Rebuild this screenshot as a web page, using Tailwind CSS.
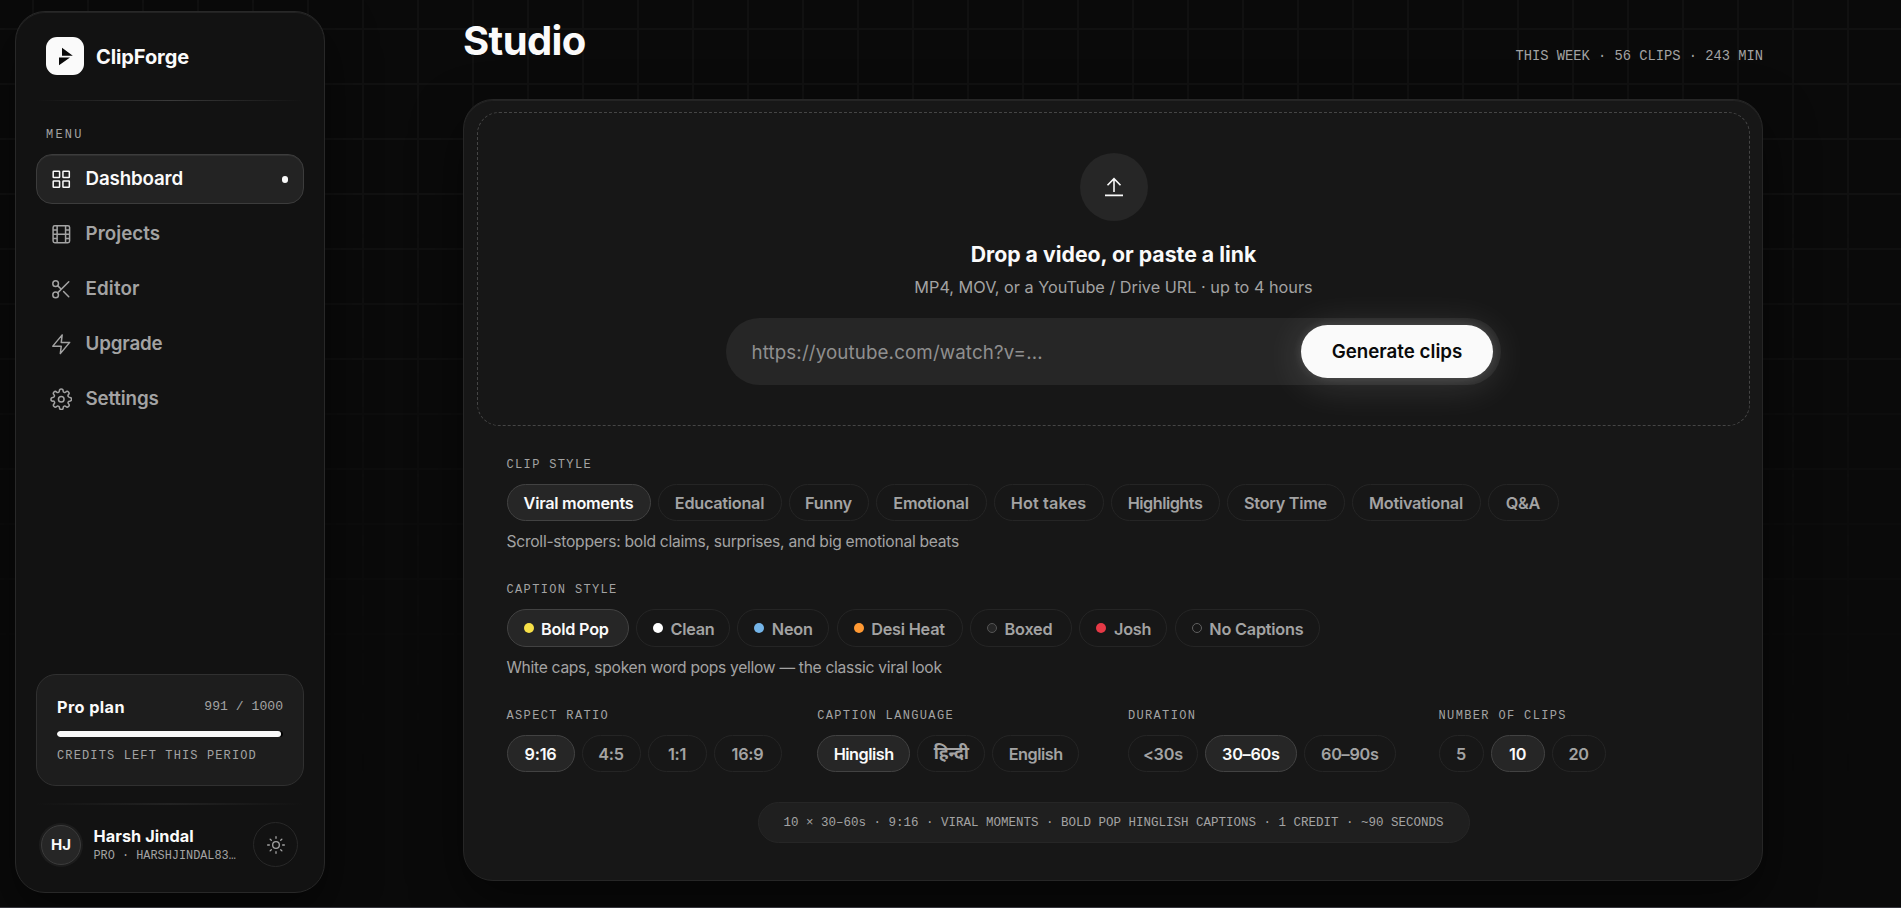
<!DOCTYPE html>
<html lang="en">
<head>
    <meta charset="UTF-8">
    <meta name="viewport" content="width=device-width, initial-scale=1.0">
    <title>ClipForge - Studio</title>
    <script src="https://cdn.jsdelivr.net/npm/@tailwindcss/browser@4"></script>
</head>
<body class="relative flex h-screen overflow-hidden bg-[#0a0a0a] font-['Inter','Noto_Sans',sans-serif] text-[#a3a3a3]">

    <!-- Background grid -->
    <div class="absolute inset-0 bg-[linear-gradient(to_right,#111111_2px,transparent_2px),linear-gradient(to_bottom,#111111_2px,transparent_2px)] bg-[size:55px_55px] bg-[position:32px_28px] mask-[linear-gradient(to_bottom,black_20%,transparent_85%)]"></div>

    <!-- Sidebar -->
    <aside class="relative mt-[11px] ml-[15px] flex h-[882px] w-[310px] shrink-0 flex-col rounded-[30px] border border-[#282828] bg-[#121212] px-5 shadow-[inset_0_1px_0_#222222,0_20px_50px_rgba(0,0,0,0.5)]">
        <div class="mt-[25px] ml-[10px] flex items-center gap-[12px]">
            <div class="size-[38px] rounded-[11px] bg-[#fafafa]">
                <svg viewBox="0 0 38 38" class="size-full fill-[#0a0a0a]"><path d="M16 10.7 26.8 18.7H16zM13 20.4H24L13 28.2z"/></svg>
            </div>
            <span class="pt-[2px] text-[20px] font-bold tracking-[-0.1px] text-[#fafafa]">ClipForge</span>
        </div>
        <div class="mt-[25px] h-px bg-linear-to-r from-transparent via-[#3a3a3a] to-transparent"></div>
        <div class="mt-[25px] ml-[10px] font-['Liberation_Mono',monospace] text-[12px] leading-[18px] tracking-[2.2px]">MENU</div>

        <nav class="mt-[10px] flex flex-col gap-[5px] text-[18.75px] font-semibold tracking-[-0.15px]">
            <a class="flex h-[50px] items-center gap-[13.5px] rounded-2xl border border-[#3c3c3c] bg-[#232323] pr-[15px] pl-[12.5px] text-[#fafafa] shadow-[inset_0_1px_0_#303030]">
                <svg viewBox="0 0 24 24" class="size-[22.5px] fill-none stroke-current stroke-[1.6]"><rect x="3.4" y="3.4" width="6.8" height="6.8" rx=".6"/><rect x="13.8" y="3.4" width="6.8" height="6.8" rx=".6"/><rect x="3.4" y="13.8" width="6.8" height="6.8" rx=".6"/><rect x="13.8" y="13.8" width="6.8" height="6.8" rx=".6"/></svg>
                <span class="flex-1">Dashboard</span>
                <span class="h-[7px] w-[6px] rounded-full bg-[#fafafa]"></span>
            </a>
            <a class="flex h-[50px] items-center gap-[13.5px] border border-transparent px-[12.5px]">
                <svg viewBox="0 0 24 24" class="size-[22.5px] fill-none stroke-current stroke-[1.6]"><rect x="3.3" y="3" width="17.6" height="18" rx="1.8"/><path d="M7.6 3v18M16.6 3v18M3.3 12h17.6M3.3 7.5h4.3M3.3 16.5h4.3M16.6 7.5h4.3M16.6 16.5h4.3"/></svg>
                <span class="tracking-[0.05px]">Projects</span>
            </a>
            <a class="flex h-[50px] items-center gap-[13.5px] border border-transparent px-[12.5px]">
                <svg viewBox="0 0 24 24" class="size-[22.5px] fill-none stroke-current stroke-[1.6] [stroke-linecap:round]"><circle cx="6" cy="6" r="3"/><circle cx="6" cy="18" r="3"/><path d="M20 4 8.12 15.88M14.47 14.48 20 20M8.12 8.12 12 12"/></svg>
                <span class="tracking-[0.15px]">Editor</span>
            </a>
            <a class="flex h-[50px] items-center gap-[13.5px] border border-transparent px-[12.5px]">
                <svg viewBox="0 0 24 24" class="size-[22.5px] fill-none stroke-current stroke-[1.6] [stroke-linejoin:round]"><path d="M13 2 3 14h9l-1 8 10-12h-9z"/></svg>
                <span>Upgrade</span>
            </a>
            <a class="flex h-[50px] items-center gap-[13.5px] border border-transparent px-[12.5px]">
                <svg viewBox="0 0 24 24" class="size-[22.5px] fill-none stroke-current stroke-[1.6] [stroke-linejoin:round]"><circle cx="12" cy="12" r="3"/><path d="M19.4 15a1.65 1.65 0 0 0 .33 1.82l.06.06a2 2 0 0 1-2.83 2.83l-.06-.06a1.65 1.65 0 0 0-2.8 1.18V21a2 2 0 0 1-4 0v-.09A1.65 1.65 0 0 0 9 19.4a1.65 1.65 0 0 0-1.82.33l-.06.06a2 2 0 0 1-2.83-2.83l.06-.06A1.65 1.65 0 0 0 3.17 14H3a2 2 0 0 1 0-4h.09A1.65 1.65 0 0 0 4.6 9a1.65 1.65 0 0 0-.33-1.82l-.06-.06a2 2 0 0 1 2.83-2.83l.06.06A1.65 1.65 0 0 0 9 4.6a1.65 1.65 0 0 0 1-1.51V3a2 2 0 0 1 4 0v.09a1.65 1.65 0 0 0 2.82 1.17l.06-.06a2 2 0 0 1 2.83 2.83l-.06.06a1.65 1.65 0 0 0-.33 1.82 1.65 1.65 0 0 0 1.51 1.09H21a2 2 0 0 1 0 4h-.09a1.65 1.65 0 0 0-1.51 1z"/></svg>
                <span>Settings</span>
            </a>
        </nav>

        <!-- Plan -->
        <div class="mt-auto h-[112px] rounded-[20px] border border-[#303030] bg-[#1d1d1d] px-5 pt-5">
            <div class="flex items-center justify-between">
                <span class="text-[16.25px] leading-6 font-bold tracking-[0.4px] text-[#fafafa]">Pro plan</span>
                <span class="font-['Liberation_Mono',monospace] text-[13.125px]">991 / 1000</span>
            </div>
            <div class="mt-[12px] h-[6px] overflow-hidden rounded-full bg-black">
                <div class="h-full rounded-full bg-[#fafafa]" style="width: 99.1%"></div>
            </div>
            <div class="mt-[10px] font-['Liberation_Mono',monospace] text-[12px] leading-[18px] tracking-[1.13px]">CREDITS LEFT THIS PERIOD</div>
        </div>
        <div class="mt-[17px] h-[2px] bg-linear-to-r from-transparent via-[#222222] to-transparent"></div>
        <div class="mt-[17px] mb-[25px] flex items-center pr-[6px] pl-[5px]">
            <div class="flex size-10 items-center justify-center rounded-full border border-[#3c3c3c] bg-[#262626] pt-px text-[15px] font-bold text-[#fafafa] shadow-[0_0_0_2px_#1c1c1c]">HJ</div>
            <div class="ml-[12.5px] flex-1 pt-[2px]">
                <div class="text-[16.25px] leading-5 font-bold tracking-[0.08px] text-[#fafafa]">Harsh Jindal</div>
                <div class="font-['Liberation_Mono',monospace] text-[11.875px] leading-5">PRO · HARSHJINDAL83…</div>
            </div>
            <div class="flex size-[45px] items-center justify-center rounded-full border border-[#282828]">
                <svg viewBox="0 0 24 24" class="size-5 fill-none stroke-current stroke-[1.6] [stroke-linecap:round]"><circle cx="12" cy="12" r="4"/><path d="M12 2v2M12 20v2M4.93 4.93l1.41 1.41M17.66 17.66l1.41 1.41M2 12h2M20 12h2M4.93 19.07l1.41-1.41M17.66 6.34l1.41-1.41"/></svg>
            </div>
        </div>
    </aside>

    <!-- Main column -->
    <main class="relative ml-[138px] flex w-[1300px] shrink-0 flex-col">
        <header class="flex h-[99px] items-start justify-between">
            <h1 class="mt-[16px] text-[40px] leading-[50px] font-bold tracking-[-0.6px] text-[#fafafa]">Studio</h1>
            <p class="mt-[47px] font-['Liberation_Mono',monospace] text-[13.75px] leading-[20px]">THIS WEEK · 56 CLIPS · 243 MIN</p>
        </header>

        <section class="flex h-[782px] flex-col rounded-[30px] border border-[#262626] bg-[#171717] pt-3 pr-3 pb-[13px] pl-[13px] shadow-[inset_0_1px_0_#242424,0_20px_50px_rgba(0,0,0,0.5)]">
            <!-- Drop zone -->
            <div class="flex h-[314px] shrink-0 flex-col items-center rounded-[22px] border border-dashed border-[#454545] pt-[40px]">
                <div class="flex size-[68px] items-center justify-center rounded-full bg-[#262626]">
                    <svg viewBox="0 0 24 24" class="size-6 fill-none stroke-[#fafafa] stroke-[1.6]"><path d="M12 17V4M5.5 10.2 12 3.7l6.5 6.5M3 20.4h18"/></svg>
                </div>
                <h2 class="mt-[17px] text-[21.25px] leading-[32px] font-bold text-[#fafafa]">Drop a video, or paste a link</h2>
                <p class="mt-[5px] text-[16.25px] leading-6">MP4, MOV, or a YouTube / Drive URL · up to 4 hours</p>
                <div class="mt-[19px] flex h-[67px] w-[775px] items-center justify-between rounded-full bg-[#262626] pr-[8px] pl-[25.5px]">
                    <span class="pt-[3px] text-[18.75px] tracking-[0.12px] text-[#8f8f8f]">https://youtube.com/watch?v=...</span>
                    <button class="h-[53px] w-[192px] rounded-full bg-[#fafafa] pt-[2px] text-[18.75px] font-semibold text-[#0a0a0a] shadow-[0_0_10px_rgba(255,255,255,0.12),0_5px_40px_rgba(255,255,255,0.16)]">Generate clips</button>
                </div>
            </div>

            <div class="mt-[30px] flex flex-col px-[29.5px]">
                <!-- Clip style -->
                <div class="font-['Liberation_Mono',monospace] text-[12px] leading-[18px] tracking-[1.35px]">CLIP STYLE</div>
                <div class="mt-[10px] flex gap-[7px] text-[16.25px] font-semibold tracking-[-0.27px]">
                    <span class="flex h-[37px] w-[144px] items-center justify-center rounded-full border border-[#424242] bg-[#262626] pt-[2px] text-[#fafafa]">Viral moments</span>
                    <span class="flex h-[37px] w-[124px] items-center justify-center rounded-full border border-[#252525] pt-[2px]">Educational</span>
                    <span class="flex h-[37px] w-[80px] items-center justify-center rounded-full border border-[#252525] pt-[2px]">Funny</span>
                    <span class="flex h-[37px] w-[111px] items-center justify-center rounded-full border border-[#252525] pt-[2px]">Emotional</span>
                    <span class="flex h-[37px] w-[110px] items-center justify-center rounded-full border border-[#252525] pt-[2px] tracking-[0.1px]">Hot takes</span>
                    <span class="flex h-[37px] w-[109px] items-center justify-center rounded-full border border-[#252525] pt-[2px] tracking-[-0.5px]">Highlights</span>
                    <span class="flex h-[37px] w-[118px] items-center justify-center rounded-full border border-[#252525] pt-[2px]">Story Time</span>
                    <span class="flex h-[37px] w-[129px] items-center justify-center rounded-full border border-[#252525] pt-[2px]">Motivational</span>
                    <span class="flex h-[37px] w-[71px] items-center justify-center rounded-full border border-[#252525] pt-[2px]">Q&amp;A</span>
                </div>
                <p class="mt-[9px] text-[15.625px] leading-6 tracking-[-0.26px]">Scroll-stoppers: bold claims, surprises, and big emotional beats</p>

                <!-- Caption style -->
                <div class="mt-[27px] font-['Liberation_Mono',monospace] text-[12px] leading-[18px] tracking-[1.35px]">CAPTION STYLE</div>
                <div class="mt-[10px] flex gap-[7.4px] text-[16.25px] font-semibold tracking-[-0.22px]">
                    <span class="flex h-[38px] w-[122px] items-center gap-[7.5px] rounded-full border border-[#424242] bg-[#262626] pt-[2px] pl-4 text-[#fafafa]"><i class="-mt-[3px] size-[10px] rounded-full bg-[#f7e048]"></i>Bold Pop</span>
                    <span class="flex h-[38px] w-[94px] items-center gap-[7.5px] rounded-full border border-[#252525] pt-[2px] pl-4"><i class="-mt-[3px] size-[10px] rounded-full bg-white"></i>Clean</span>
                    <span class="flex h-[38px] w-[92px] items-center gap-[7.5px] rounded-full border border-[#252525] pt-[2px] pl-4"><i class="-mt-[3px] size-[10px] rounded-full bg-[#74b4e8]"></i>Neon</span>
                    <span class="flex h-[38px] w-[126px] items-center gap-[7.5px] rounded-full border border-[#252525] pt-[2px] pl-4"><i class="-mt-[3px] size-[10px] rounded-full bg-[#ff9933]"></i>Desi Heat</span>
                    <span class="flex h-[38px] w-[102px] items-center gap-[7.5px] rounded-full border border-[#252525] pt-[2px] pl-4"><i class="-mt-[3px] size-[10px] rounded-full border border-[#555555] bg-[#262626]"></i>Boxed</span>
                    <span class="flex h-[38px] w-[88px] items-center gap-[7.5px] rounded-full border border-[#252525] pt-[2px] pl-4"><i class="-mt-[3px] size-[10px] rounded-full bg-[#e63946]"></i>Josh</span>
                    <span class="flex h-[38px] w-[145px] items-center gap-[7.5px] rounded-full border border-[#252525] pt-[2px] pl-4"><i class="-mt-[3px] size-[10px] rounded-full border border-[#606060]"></i>No Captions</span>
                </div>
                <p class="mt-[9px] text-[15.625px] leading-6 tracking-[-0.29px]">White caps, spoken word pops yellow — the classic viral look</p>

                <!-- Output options -->
                <div class="mt-[27px] grid grid-cols-[repeat(4,310.7px)] text-[16.25px] font-semibold tracking-[-0.27px]">
                    <div>
                        <div class="font-['Liberation_Mono',monospace] text-[12px] leading-[18px] font-normal tracking-[1.35px]">ASPECT RATIO</div>
                        <div class="mt-[10px] flex gap-[7px]">
                            <span class="flex h-[37px] w-[68px] items-center justify-center rounded-full border border-[#424242] bg-[#262626] pt-[2px] text-[#fafafa]">9:16</span>
                            <span class="flex h-[37px] w-[59px] items-center justify-center rounded-full border border-[#252525] pt-[2px]">4:5</span>
                            <span class="flex h-[37px] w-[59px] items-center justify-center rounded-full border border-[#252525] pt-[2px]">1:1</span>
                            <span class="flex h-[37px] w-[68px] items-center justify-center rounded-full border border-[#252525] pt-[2px]">16:9</span>
                        </div>
                    </div>
                    <div>
                        <div class="font-['Liberation_Mono',monospace] text-[12px] leading-[18px] font-normal tracking-[1.35px]">CAPTION LANGUAGE</div>
                        <div class="mt-[10px] flex gap-[7px]">
                            <span class="flex h-[37px] w-[93px] items-center justify-center rounded-full border border-[#424242] bg-[#262626] pt-[2px] tracking-[-0.5px] text-[#fafafa]">Hinglish</span>
                            <span class="flex h-[37px] w-[68px] items-center justify-center rounded-full border border-[#252525] text-[17.5px] font-bold">हिन्दी</span>
                            <span class="flex h-[37px] w-[87px] items-center justify-center rounded-full border border-[#252525] pt-[2px] tracking-[-0.5px]">English</span>
                        </div>
                    </div>
                    <div>
                        <div class="font-['Liberation_Mono',monospace] text-[12px] leading-[18px] font-normal tracking-[1.35px]">DURATION</div>
                        <div class="mt-[10px] flex gap-[7px]">
                            <span class="flex h-[37px] w-[70px] items-center justify-center rounded-full border border-[#252525] pt-[2px]">&lt;30s</span>
                            <span class="flex h-[37px] w-[92px] items-center justify-center rounded-full border border-[#424242] bg-[#262626] pt-[2px] text-[#fafafa]">30–60s</span>
                            <span class="flex h-[37px] w-[92px] items-center justify-center rounded-full border border-[#252525] pt-[2px]">60–90s</span>
                        </div>
                    </div>
                    <div>
                        <div class="font-['Liberation_Mono',monospace] text-[12px] leading-[18px] font-normal tracking-[1.35px]">NUMBER OF CLIPS</div>
                        <div class="mt-[10px] flex gap-[7px]">
                            <span class="flex h-[37px] w-[45px] items-center justify-center rounded-full border border-[#252525] pt-[2px]">5</span>
                            <span class="flex h-[37px] w-[54px] items-center justify-center rounded-full border border-[#424242] bg-[#262626] pt-[2px] text-[#fafafa]">10</span>
                            <span class="flex h-[37px] w-[54px] items-center justify-center rounded-full border border-[#252525] pt-[2px]">20</span>
                        </div>
                    </div>
                </div>
            </div>

            <!-- Summary -->
            <div class="mt-[30px] flex h-[41px] w-[712px] items-center justify-center self-center rounded-full border border-[#262626] bg-[#1f1f1f] pt-px font-['Liberation_Mono',monospace] text-[12.5px] whitespace-pre">10 × 30–60s · 9:16 · VIRAL MOMENTS · BOLD POP HINGLISH CAPTIONS · 1 CREDIT · ~90 SECONDS</div>
        </section>
    </main>

    <div class="absolute inset-x-0 bottom-0 h-px bg-[#35353b]"></div>
</body>
</html>
